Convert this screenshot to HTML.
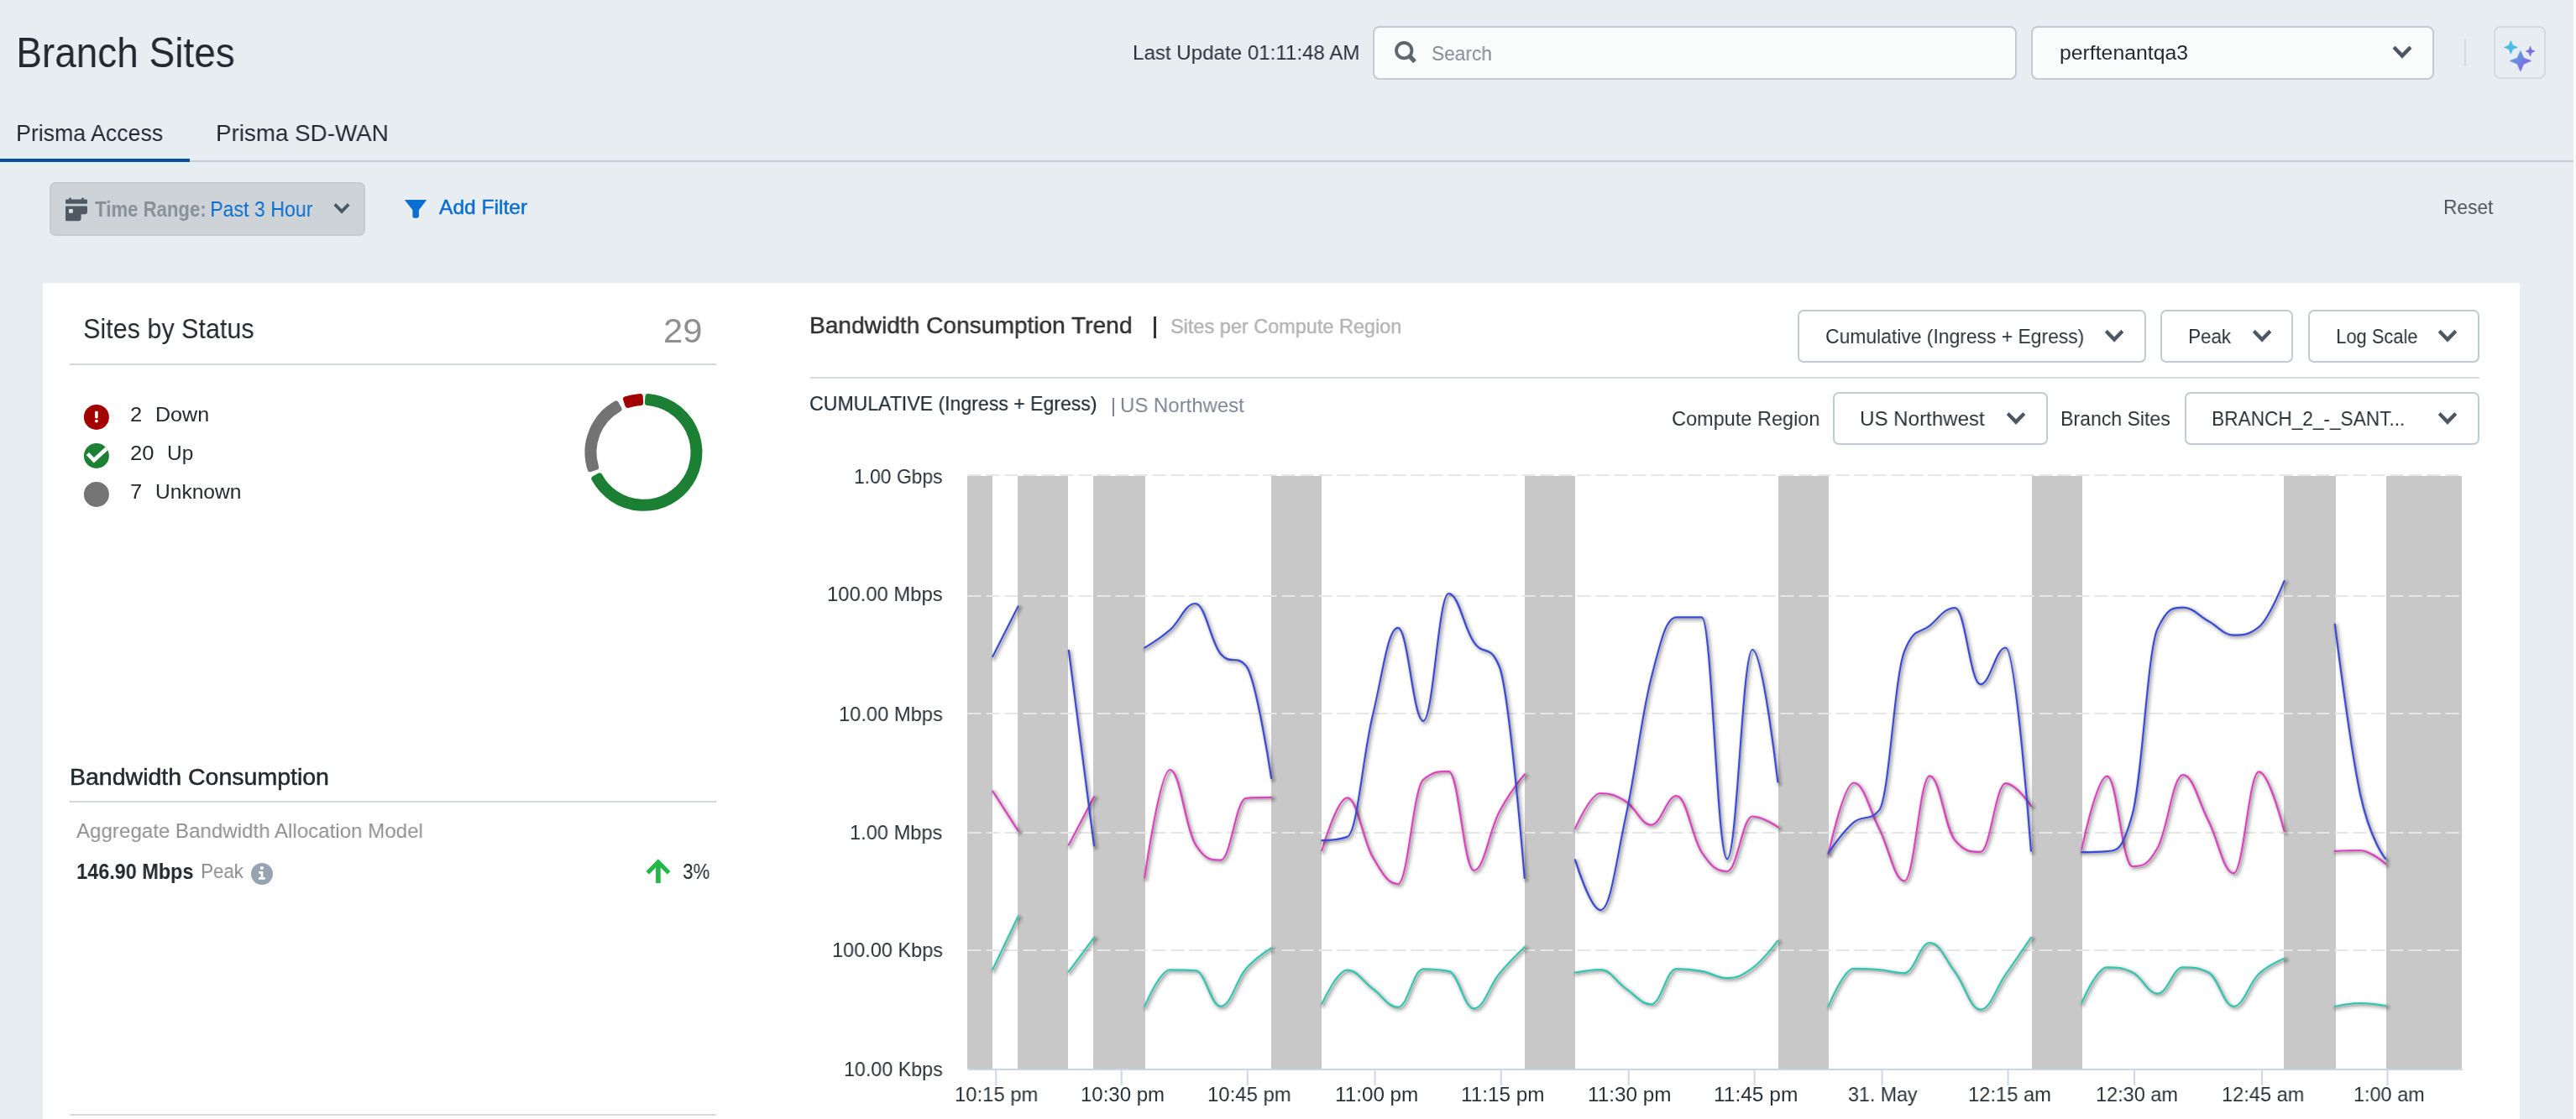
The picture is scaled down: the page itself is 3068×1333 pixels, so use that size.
<!DOCTYPE html>
<html><head><meta charset="utf-8"><style>
html,body{margin:0;padding:0;}
body{width:3068px;height:1333px;overflow:hidden;background:#e8edf1;position:relative;font-family:"Liberation Sans",sans-serif;}
.t{position:absolute;white-space:nowrap;line-height:1;will-change:transform;font-family:"Liberation Sans",sans-serif;}
.box{position:absolute;box-sizing:border-box;}
.abs{position:absolute;overflow:visible;}
</style></head><body>
<div class="t" style="left:18.90px;top:38.20px;font-size:50px;color:#22292f;transform:scaleX(0.9185);transform-origin:4.00px 0;">Branch Sites</div>
<div class="t" style="left:1348.70px;top:51.17px;font-size:24.5px;color:#2a3137;transform:scaleX(0.9843);transform-origin:2.00px 0;">Last Update 01:11:48 AM</div>
<div class="box" style="left:1635px;top:31px;width:767px;height:64px;border-radius:8px;background:#fafbfb;border:2px solid #c3cad1;"></div>
<svg class="abs" style="left:1655px;top:45px" width="40" height="36" viewBox="0 0 40 36"><circle cx="17.2" cy="15.2" r="9.2" fill="none" stroke="#5c6770" stroke-width="3.8"/><line x1="23.5" y1="21.5" x2="30" y2="28.5" stroke="#5c6770" stroke-width="5.4"/></svg>
<div class="t" style="left:1704.70px;top:51.60px;font-size:24px;color:#808b94;transform:scaleX(0.9442);transform-origin:1.00px 0;">Search</div>
<div class="box" style="left:2419px;top:31px;width:480px;height:64px;border-radius:8px;background:#fafbfb;border:2px solid #c3cad1;"></div>
<div class="t" style="left:2452.90px;top:50.77px;font-size:24.5px;color:#22292f;transform:scaleX(1.0121);transform-origin:1.50px 0;">perftenantqa3</div>
<svg class="abs" style="left:0;top:0" width="3068" height="600"><path d="M2850.00 57.80 L2852.50 55.00 L2861.00 63.60 L2869.50 55.00 L2872.00 57.80 L2861.00 69.40Z" fill="#4b5661" stroke="#4b5661" stroke-width="0.8" stroke-linejoin="round"/></svg>
<div class="box" style="left:2935px;top:47px;width:2px;height:32px;background:#d3d8dd"></div>
<div class="box" style="left:2970px;top:31px;width:62px;height:63px;border-radius:8px;background:#e8edf1;border:2px solid #d5dade;box-sizing:border-box"></div>
<svg class="abs" style="left:0;top:0" width="3068" height="120"><defs><linearGradient id="sg" gradientUnits="userSpaceOnUse" x1="2990" y1="60" x2="3014" y2="85"><stop offset="0" stop-color="#52b2e0"/><stop offset="1" stop-color="#9150e2"/></linearGradient><linearGradient id="sg2" gradientUnits="userSpaceOnUse" x1="3008" y1="55" x2="3019" y2="67"><stop offset="0" stop-color="#6f86e0"/><stop offset="1" stop-color="#8c55e0"/></linearGradient></defs><path d="M2990.40 48.50 L2992.80 54.03 L2998.40 56.40 L2992.80 58.77 L2990.40 64.30 L2988.00 58.77 L2982.40 56.40 L2988.00 54.03Z" fill="#4bbde0" stroke="#4bbde0" stroke-width="0.6" stroke-linejoin="round"/><path d="M3001.90 60.20 L3005.77 68.88 L3014.80 72.60 L3005.77 76.32 L3001.90 85.00 L2998.03 76.32 L2989.00 72.60 L2998.03 68.88Z" fill="url(#sg)" stroke="url(#sg)" stroke-width="0.6" stroke-linejoin="round"/><path d="M3013.50 55.10 L3015.15 59.23 L3019.00 61.00 L3015.15 62.77 L3013.50 66.90 L3011.85 62.77 L3008.00 61.00 L3011.85 59.23Z" fill="url(#sg2)" stroke="url(#sg2)" stroke-width="0.6" stroke-linejoin="round"/></svg>
<div class="t" style="left:18.85px;top:143.58px;font-size:28.5px;color:#22292f;transform:scaleX(0.9361);transform-origin:2.25px 0;">Prisma Access</div>
<div class="t" style="left:257.45px;top:143.58px;font-size:28.5px;color:#22292f;transform:scaleX(0.9743);transform-origin:2.25px 0;">Prisma SD-WAN</div>
<div class="box" style="left:0;top:191px;width:3068px;height:2px;background:#c8ced3"></div>
<div class="box" style="left:3065px;top:0;width:3px;height:1333px;background:#fbfcfc"></div>
<div class="box" style="left:0;top:189px;width:226px;height:4px;background:#0050a0"></div>
<div class="box" style="left:59px;top:217px;width:376px;height:64px;border-radius:7px;background:#ced3d8;border:2px solid #c6cbd0;box-sizing:border-box"></div>
<svg class="abs" style="left:78px;top:234.5px" width="28" height="30" viewBox="0 0 28 30">
<rect x="4.1" y="0.4" width="2.7" height="5" rx="1.2" fill="#4f5a64"/><rect x="19.1" y="0.4" width="2.7" height="5" rx="1.2" fill="#4f5a64"/>
<rect x="0" y="2.4" width="26" height="5.4" rx="1.2" fill="#4f5a64"/>
<path d="M1.2 10.6 H24.8 Q26 10.6 26 11.8 V17 Q26 20.2 22.8 20.2 H18.6 V25 Q18.6 28.2 15.4 28.2 H1.2 Q0 28.2 0 27 V11.8 Q0 10.6 1.2 10.6 Z" fill="#4f5a64"/>
<rect x="4" y="14.1" width="4.9" height="4.6" rx="1" fill="#dfe3e6"/></svg>
<div class="t" style="left:112.95px;top:235.90px;font-size:26px;color:#87919a;transform:scaleX(0.8523);transform-origin:0.25px 0;font-weight:bold;">Time Range:</div>
<div class="t" style="left:249.70px;top:235.90px;font-size:26px;color:#0a70d0;transform:scaleX(0.8896);transform-origin:2.00px 0;">Past 3 Hour</div>
<svg class="abs" style="left:0;top:0" width="3068" height="600"><path d="M397.98 244.80 L400.03 242.50 L407.00 249.55 L413.97 242.50 L416.02 244.80 L407.00 254.31Z" fill="#4b5661" stroke="#4b5661" stroke-width="0.8" stroke-linejoin="round"/></svg>
<svg class="abs" style="left:482px;top:237.6px" width="28" height="24" viewBox="0 0 28 24">
<path d="M0 0.3 Q0 0 0.5 0 H25.6 Q26.1 0 26.1 0.3 L16.9 12.2 V19.8 Q16.9 21.8 13.05 21.8 Q9.4 21.8 9.4 19.8 V12.2 Z" fill="#0a6fd0"/></svg>
<div class="t" style="left:522.90px;top:235.08px;font-size:24.5px;color:#0a6fd0;transform:scaleX(1.0029);transform-origin:0.00px 0;-webkit-text-stroke:0.5px #0a6fd0;">Add Filter</div>
<div class="t" style="left:2909.60px;top:235.40px;font-size:24px;color:#4a5560;transform:scaleX(0.9438);transform-origin:2.00px 0;">Reset</div>
<div class="box" style="left:51px;top:337px;width:2950px;height:996px;background:#ffffff"></div>
<div class="t" style="left:98.50px;top:375.25px;font-size:33px;color:#22292f;transform:scaleX(0.9247);transform-origin:1.50px 0;">Sites by Status</div>
<div class="t" style="left:790.00px;top:373.65px;font-size:41px;color:#8f8f8f;transform:scaleX(1.0180);transform-origin:2.00px 0;">29</div>
<div class="box" style="left:83px;top:432.5px;width:770px;height:2px;background:#d6d9dc"></div>
<svg class="abs" style="left:0;top:0" width="200" height="620">
<defs><clipPath id="cu"><circle cx="114.9" cy="543" r="15"/></clipPath></defs>
<circle cx="114.9" cy="496.9" r="15" fill="#a30000"/>
<rect x="113.1" y="489.8" width="3.6" height="8.6" rx="1.3" fill="#fff"/><circle cx="114.9" cy="501.6" r="1.9" fill="#fff"/>
<circle cx="114.9" cy="543" r="15" fill="#1d8035"/>
<polyline clip-path="url(#cu)" points="104.4,540.5 111.9,548.3 129,532.5" fill="none" stroke="#fff" stroke-width="4.6"/>
<circle cx="114.9" cy="588.9" r="15" fill="#747474"/>
</svg>
<div class="t" style="left:154.75px;top:482.18px;font-size:24.5px;color:#22292f;transform:scaleX(1.0400);transform-origin:1.25px 0;">2</div>
<div class="t" style="left:184.80px;top:482.18px;font-size:24.5px;color:#22292f;transform:scaleX(1.0237);transform-origin:2.00px 0;">Down</div>
<div class="t" style="left:154.75px;top:527.77px;font-size:24.5px;color:#22292f;transform:scaleX(1.0455);transform-origin:1.25px 0;">20</div>
<div class="t" style="left:198.75px;top:527.77px;font-size:24.5px;color:#22292f;transform:scaleX(0.9965);transform-origin:1.75px 0;">Up</div>
<div class="t" style="left:154.75px;top:573.97px;font-size:24.5px;color:#22292f;transform:scaleX(1.0400);transform-origin:1.25px 0;">7</div>
<div class="t" style="left:185.05px;top:573.97px;font-size:24.5px;color:#22292f;transform:scaleX(1.0025);transform-origin:1.75px 0;">Unknown</div>
<svg class="abs" style="left:0;top:0" width="1000" height="700"><path d="M771.93 472.52 A66.5 66.5 0 1 1 707.88 570.21 L714.05 566.90 A59.5 59.5 0 1 0 771.36 479.50Z" fill="#1b8034" stroke="#1b8034" stroke-width="7.0" stroke-linejoin="round"/><path d="M703.01 558.59 A66.5 66.5 0 0 1 733.57 481.03 L737.04 487.11 A59.5 59.5 0 0 0 709.70 556.51Z" fill="#737373" stroke="#737373" stroke-width="7.0" stroke-linejoin="round"/><path d="M745.60 475.67 A66.5 66.5 0 0 1 762.23 472.44 L762.68 479.42 A59.5 59.5 0 0 0 747.80 482.31Z" fill="#a00000" stroke="#a00000" stroke-width="7.0" stroke-linejoin="round"/></svg>
<div class="t" style="left:82.95px;top:910.77px;font-size:28.5px;color:#22292f;-webkit-text-stroke:0.5px #22292f;">Bandwidth Consumption</div>
<div class="box" style="left:83px;top:953.5px;width:770px;height:2px;background:#d6d9dc"></div>
<div class="t" style="left:91.30px;top:978.07px;font-size:24.5px;color:#8f8f8f;transform:scaleX(0.9841);transform-origin:0.00px 0;">Aggregate Bandwidth Allocation Model</div>
<div class="t" style="left:91.40px;top:1024.80px;font-size:26px;color:#22292f;transform:scaleX(0.9005);transform-origin:1.50px 0;font-weight:bold;">146.90 Mbps</div>
<div class="t" style="left:238.90px;top:1025.88px;font-size:24.5px;color:#8c8c8c;transform:scaleX(0.9079);transform-origin:2.00px 0;">Peak</div>
<svg class="abs" style="left:0;top:0" width="900" height="1100">
<circle cx="312" cy="1041" r="13" fill="#97a3b0"/>
<circle cx="311.9" cy="1034" r="2.1" fill="#fff"/>
<path d="M308.2 1038 H313.3 V1045 H315.7 V1047.8 H308 V1045 H310.6 V1040.8 H308.2 Z" fill="#fff"/>
<path d="M783.9 1023.2 L798.4 1038 L794.7 1041.5 L786.7 1033.5 V1051.9 H781.1 V1033.5 L773.1 1041.5 L769.4 1038 Z" fill="#21b847"/>
</svg>
<div class="t" style="left:812.50px;top:1025.75px;font-size:25px;color:#22292f;transform:scaleX(0.8905);transform-origin:1.00px 0;">3%</div>
<div class="box" style="left:83px;top:1326.5px;width:770px;height:2px;background:#d6d9dc"></div>
<div class="t" style="left:964.35px;top:373.27px;font-size:28.5px;color:#303030;transform:scaleX(0.9864);transform-origin:2.25px 0;-webkit-text-stroke:0.45px #303030;">Bandwidth Consumption Trend</div>
<div class="box" style="left:1374.2px;top:376.5px;width:2.4px;height:26.5px;background:#333"></div>
<div class="t" style="left:1393.85px;top:376.68px;font-size:24.5px;color:#b3b3b3;transform:scaleX(0.9578);transform-origin:1.25px 0;-webkit-text-stroke:0.45px #b3b3b3;">Sites per Compute Region</div>
<div class="box" style="left:965px;top:448.5px;width:1988px;height:2px;background:#d9dcdf"></div>
<div class="t" style="left:964.35px;top:469.07px;font-size:24.5px;color:#1f2a33;transform:scaleX(0.9416);transform-origin:1.25px 0;-webkit-text-stroke:0.2px #1f2a33;">CUMULATIVE (Ingress + Egress)</div>
<div class="box" style="left:1325px;top:474px;width:2px;height:21.6px;background:#7b8794"></div>
<div class="t" style="left:1334.25px;top:470.88px;font-size:24.5px;color:#7b8692;transform:scaleX(0.9776);transform-origin:1.75px 0;">US Northwest</div>
<div class="box" style="left:2140.5px;top:369px;width:415.0px;height:63px;border-radius:7px;background:#fff;border:2px solid #c3cad1;box-sizing:border-box"></div>
<div class="t" style="left:2173.75px;top:388.88px;font-size:24.5px;color:#2a3137;transform:scaleX(0.9334);transform-origin:1.25px 0;">Cumulative (Ingress + Egress)</div>
<svg class="abs" style="left:0;top:0" width="3068" height="600"><path d="M2507.32 395.94 L2509.77 393.20 L2518.10 401.63 L2526.43 393.20 L2528.88 395.94 L2518.10 407.31Z" fill="#4b5661" stroke="#4b5661" stroke-width="0.8" stroke-linejoin="round"/></svg>
<div class="box" style="left:2573px;top:369px;width:158px;height:63px;border-radius:7px;background:#fff;border:2px solid #c3cad1;box-sizing:border-box"></div>
<div class="t" style="left:2606.30px;top:388.88px;font-size:24.5px;color:#2a3137;transform:scaleX(0.9116);transform-origin:2.00px 0;">Peak</div>
<svg class="abs" style="left:0;top:0" width="3068" height="600"><path d="M2683.32 395.94 L2685.77 393.20 L2694.10 401.63 L2702.43 393.20 L2704.88 395.94 L2694.10 407.31Z" fill="#4b5661" stroke="#4b5661" stroke-width="0.8" stroke-linejoin="round"/></svg>
<div class="box" style="left:2748.5px;top:369px;width:204.0px;height:63px;border-radius:7px;background:#fff;border:2px solid #c3cad1;box-sizing:border-box"></div>
<div class="t" style="left:2781.60px;top:388.88px;font-size:24.5px;color:#2a3137;transform:scaleX(0.8927);transform-origin:2.00px 0;">Log Scale</div>
<svg class="abs" style="left:0;top:0" width="3068" height="600"><path d="M2904.22 395.94 L2906.67 393.20 L2915.00 401.63 L2923.33 393.20 L2925.78 395.94 L2915.00 407.31Z" fill="#4b5661" stroke="#4b5661" stroke-width="0.8" stroke-linejoin="round"/></svg>
<div class="t" style="left:1990.55px;top:487.18px;font-size:24.5px;color:#2a3137;transform:scaleX(0.9591);transform-origin:1.25px 0;">Compute Region</div>
<div class="box" style="left:2182.5px;top:467px;width:256.0px;height:63px;border-radius:7px;background:#fff;border:2px solid #c3cad1;box-sizing:border-box"></div>
<div class="t" style="left:2215.35px;top:487.18px;font-size:24.5px;color:#2a3137;transform:scaleX(0.9836);transform-origin:1.75px 0;">US Northwest</div>
<svg class="abs" style="left:0;top:0" width="3068" height="600"><path d="M2390.22 494.14 L2392.67 491.40 L2401.00 499.83 L2409.33 491.40 L2411.78 494.14 L2401.00 505.51Z" fill="#4b5661" stroke="#4b5661" stroke-width="0.8" stroke-linejoin="round"/></svg>
<div class="t" style="left:2454.30px;top:487.18px;font-size:24.5px;color:#2a3137;transform:scaleX(0.9402);transform-origin:2.00px 0;">Branch Sites</div>
<div class="box" style="left:2601.5px;top:467px;width:351.0px;height:63px;border-radius:7px;background:#fff;border:2px solid #c3cad1;box-sizing:border-box"></div>
<div class="t" style="left:2634.20px;top:487.18px;font-size:24.5px;color:#2a3137;transform:scaleX(0.9238);transform-origin:2.00px 0;">BRANCH_2_-_SANT...</div>
<svg class="abs" style="left:0;top:0" width="3068" height="600"><path d="M2904.22 494.14 L2906.67 491.40 L2915.00 499.83 L2923.33 491.40 L2925.78 494.14 L2915.00 505.51Z" fill="#4b5661" stroke="#4b5661" stroke-width="0.8" stroke-linejoin="round"/></svg>
<svg class="abs" style="left:0;top:0" width="3068" height="1333"><rect x="1152" y="567" width="30" height="706" fill="#c8c8c8"/><rect x="1212" y="567" width="60" height="706" fill="#c8c8c8"/><rect x="1302" y="567" width="62" height="706" fill="#c8c8c8"/><rect x="1514" y="567" width="60" height="706" fill="#c8c8c8"/><rect x="1816" y="567" width="60" height="706" fill="#c8c8c8"/><rect x="2118" y="567" width="60" height="706" fill="#c8c8c8"/><rect x="2420" y="567" width="60" height="706" fill="#c8c8c8"/><rect x="2720" y="567" width="62" height="706" fill="#c8c8c8"/><rect x="2842" y="567" width="90" height="706" fill="#c8c8c8"/><line x1="1152.6" y1="566" x2="2932" y2="566" stroke="#e6e6e6" stroke-width="2" stroke-dasharray="16,6"/><line x1="1152.6" y1="710" x2="2932" y2="710" stroke="#e6e6e6" stroke-width="2" stroke-dasharray="16,6"/><line x1="1152.6" y1="850" x2="2932" y2="850" stroke="#e6e6e6" stroke-width="2" stroke-dasharray="16,6"/><line x1="1152.6" y1="992" x2="2932" y2="992" stroke="#e6e6e6" stroke-width="2" stroke-dasharray="16,6"/><line x1="1152.6" y1="1132" x2="2932" y2="1132" stroke="#e6e6e6" stroke-width="2" stroke-dasharray="16,6"/><line x1="1152.6" y1="1274" x2="2933" y2="1274" stroke="#ccd6eb" stroke-width="2"/><line x1="1186.3" y1="1274" x2="1186.3" y2="1293" stroke="#ccd6eb" stroke-width="2"/><line x1="1335.7" y1="1274" x2="1335.7" y2="1293" stroke="#ccd6eb" stroke-width="2"/><line x1="1485.8" y1="1274" x2="1485.8" y2="1293" stroke="#ccd6eb" stroke-width="2"/><line x1="1637.6" y1="1274" x2="1637.6" y2="1293" stroke="#ccd6eb" stroke-width="2"/><line x1="1787.7" y1="1274" x2="1787.7" y2="1293" stroke="#ccd6eb" stroke-width="2"/><line x1="1939.7" y1="1274" x2="1939.7" y2="1293" stroke="#ccd6eb" stroke-width="2"/><line x1="2089.6" y1="1274" x2="2089.6" y2="1293" stroke="#ccd6eb" stroke-width="2"/><line x1="2241.6" y1="1274" x2="2241.6" y2="1293" stroke="#ccd6eb" stroke-width="2"/><line x1="2391.6" y1="1274" x2="2391.6" y2="1293" stroke="#ccd6eb" stroke-width="2"/><line x1="2542.1" y1="1274" x2="2542.1" y2="1293" stroke="#ccd6eb" stroke-width="2"/><line x1="2694.1" y1="1274" x2="2694.1" y2="1293" stroke="#ccd6eb" stroke-width="2"/><line x1="2843.5" y1="1274" x2="2843.5" y2="1293" stroke="#ccd6eb" stroke-width="2"/><g transform="translate(2,2)" fill="none" stroke="#000" stroke-linejoin="round" stroke-linecap="round"><path d="M1182.36 1154.70 C1182.36 1154.70 1212.52 1091.80 1212.52 1091.80 M1272.84 1157.40 C1272.84 1157.40 1303.00 1116.80 1303.00 1116.80 M1363.32 1198.80 C1363.32 1198.80 1381.42 1155.30 1393.48 1155.30 C1405.54 1155.30 1411.58 1155.30 1423.64 1156.00 C1435.70 1156.70 1441.74 1198.80 1453.80 1198.80 C1465.86 1198.80 1471.90 1167.88 1483.96 1154.00 C1496.02 1140.12 1514.12 1129.40 1514.12 1129.40 M1574.44 1195.70 C1574.44 1195.70 1592.54 1155.70 1604.60 1155.70 C1616.66 1155.70 1622.70 1168.78 1634.76 1177.60 C1646.82 1186.42 1652.86 1199.80 1664.92 1199.80 C1676.98 1199.80 1683.02 1154.40 1695.08 1154.40 C1707.14 1154.40 1713.18 1154.40 1725.24 1156.90 C1737.30 1159.40 1743.34 1201.30 1755.40 1201.30 C1767.46 1201.30 1773.50 1174.62 1785.56 1160.00 C1797.62 1145.38 1815.72 1128.20 1815.72 1128.20 M1876.04 1158.60 C1876.04 1158.60 1894.14 1155.10 1906.20 1155.10 C1918.26 1155.10 1924.30 1169.36 1936.36 1177.60 C1948.42 1185.84 1954.46 1196.30 1966.52 1196.30 C1978.58 1196.30 1984.62 1154.10 1996.68 1154.10 C2008.74 1154.10 2014.78 1154.70 2026.84 1156.90 C2038.90 1159.10 2044.94 1165.10 2057.00 1165.10 C2069.06 1165.10 2075.10 1162.08 2087.16 1153.20 C2099.22 1144.32 2117.32 1120.70 2117.32 1120.70 M2177.64 1198.80 C2177.64 1198.80 2195.74 1153.80 2207.80 1153.80 C2219.86 1153.80 2225.90 1153.94 2237.96 1155.00 C2250.02 1156.06 2256.06 1159.10 2268.12 1159.10 C2280.18 1159.10 2286.22 1123.20 2298.28 1123.20 C2310.34 1123.20 2316.38 1142.32 2328.44 1158.20 C2340.50 1174.08 2346.54 1202.60 2358.60 1202.60 C2370.66 1202.60 2376.70 1177.84 2388.76 1160.70 C2400.82 1143.56 2418.92 1116.90 2418.92 1116.90 M2479.24 1194.50 C2479.24 1194.50 2497.34 1152.30 2509.40 1152.30 C2521.46 1152.30 2527.50 1152.30 2539.56 1158.20 C2551.62 1164.10 2557.66 1183.60 2569.72 1183.60 C2581.78 1183.60 2587.82 1152.30 2599.88 1152.30 C2611.94 1152.30 2617.98 1152.30 2630.04 1158.20 C2642.10 1164.10 2648.14 1198.80 2660.20 1198.80 C2672.26 1198.80 2678.30 1171.38 2690.36 1160.00 C2702.42 1148.62 2720.52 1141.90 2720.52 1141.90 M2780.84 1199.00 C2780.84 1199.00 2798.94 1195.00 2811.00 1195.00 C2823.06 1195.00 2841.16 1198.00 2841.16 1198.00" stroke-opacity="0.05" stroke-width="10"/><path d="M1182.36 1154.70 C1182.36 1154.70 1212.52 1091.80 1212.52 1091.80 M1272.84 1157.40 C1272.84 1157.40 1303.00 1116.80 1303.00 1116.80 M1363.32 1198.80 C1363.32 1198.80 1381.42 1155.30 1393.48 1155.30 C1405.54 1155.30 1411.58 1155.30 1423.64 1156.00 C1435.70 1156.70 1441.74 1198.80 1453.80 1198.80 C1465.86 1198.80 1471.90 1167.88 1483.96 1154.00 C1496.02 1140.12 1514.12 1129.40 1514.12 1129.40 M1574.44 1195.70 C1574.44 1195.70 1592.54 1155.70 1604.60 1155.70 C1616.66 1155.70 1622.70 1168.78 1634.76 1177.60 C1646.82 1186.42 1652.86 1199.80 1664.92 1199.80 C1676.98 1199.80 1683.02 1154.40 1695.08 1154.40 C1707.14 1154.40 1713.18 1154.40 1725.24 1156.90 C1737.30 1159.40 1743.34 1201.30 1755.40 1201.30 C1767.46 1201.30 1773.50 1174.62 1785.56 1160.00 C1797.62 1145.38 1815.72 1128.20 1815.72 1128.20 M1876.04 1158.60 C1876.04 1158.60 1894.14 1155.10 1906.20 1155.10 C1918.26 1155.10 1924.30 1169.36 1936.36 1177.60 C1948.42 1185.84 1954.46 1196.30 1966.52 1196.30 C1978.58 1196.30 1984.62 1154.10 1996.68 1154.10 C2008.74 1154.10 2014.78 1154.70 2026.84 1156.90 C2038.90 1159.10 2044.94 1165.10 2057.00 1165.10 C2069.06 1165.10 2075.10 1162.08 2087.16 1153.20 C2099.22 1144.32 2117.32 1120.70 2117.32 1120.70 M2177.64 1198.80 C2177.64 1198.80 2195.74 1153.80 2207.80 1153.80 C2219.86 1153.80 2225.90 1153.94 2237.96 1155.00 C2250.02 1156.06 2256.06 1159.10 2268.12 1159.10 C2280.18 1159.10 2286.22 1123.20 2298.28 1123.20 C2310.34 1123.20 2316.38 1142.32 2328.44 1158.20 C2340.50 1174.08 2346.54 1202.60 2358.60 1202.60 C2370.66 1202.60 2376.70 1177.84 2388.76 1160.70 C2400.82 1143.56 2418.92 1116.90 2418.92 1116.90 M2479.24 1194.50 C2479.24 1194.50 2497.34 1152.30 2509.40 1152.30 C2521.46 1152.30 2527.50 1152.30 2539.56 1158.20 C2551.62 1164.10 2557.66 1183.60 2569.72 1183.60 C2581.78 1183.60 2587.82 1152.30 2599.88 1152.30 C2611.94 1152.30 2617.98 1152.30 2630.04 1158.20 C2642.10 1164.10 2648.14 1198.80 2660.20 1198.80 C2672.26 1198.80 2678.30 1171.38 2690.36 1160.00 C2702.42 1148.62 2720.52 1141.90 2720.52 1141.90 M2780.84 1199.00 C2780.84 1199.00 2798.94 1195.00 2811.00 1195.00 C2823.06 1195.00 2841.16 1198.00 2841.16 1198.00" stroke-opacity="0.1" stroke-width="6"/><path d="M1182.36 1154.70 C1182.36 1154.70 1212.52 1091.80 1212.52 1091.80 M1272.84 1157.40 C1272.84 1157.40 1303.00 1116.80 1303.00 1116.80 M1363.32 1198.80 C1363.32 1198.80 1381.42 1155.30 1393.48 1155.30 C1405.54 1155.30 1411.58 1155.30 1423.64 1156.00 C1435.70 1156.70 1441.74 1198.80 1453.80 1198.80 C1465.86 1198.80 1471.90 1167.88 1483.96 1154.00 C1496.02 1140.12 1514.12 1129.40 1514.12 1129.40 M1574.44 1195.70 C1574.44 1195.70 1592.54 1155.70 1604.60 1155.70 C1616.66 1155.70 1622.70 1168.78 1634.76 1177.60 C1646.82 1186.42 1652.86 1199.80 1664.92 1199.80 C1676.98 1199.80 1683.02 1154.40 1695.08 1154.40 C1707.14 1154.40 1713.18 1154.40 1725.24 1156.90 C1737.30 1159.40 1743.34 1201.30 1755.40 1201.30 C1767.46 1201.30 1773.50 1174.62 1785.56 1160.00 C1797.62 1145.38 1815.72 1128.20 1815.72 1128.20 M1876.04 1158.60 C1876.04 1158.60 1894.14 1155.10 1906.20 1155.10 C1918.26 1155.10 1924.30 1169.36 1936.36 1177.60 C1948.42 1185.84 1954.46 1196.30 1966.52 1196.30 C1978.58 1196.30 1984.62 1154.10 1996.68 1154.10 C2008.74 1154.10 2014.78 1154.70 2026.84 1156.90 C2038.90 1159.10 2044.94 1165.10 2057.00 1165.10 C2069.06 1165.10 2075.10 1162.08 2087.16 1153.20 C2099.22 1144.32 2117.32 1120.70 2117.32 1120.70 M2177.64 1198.80 C2177.64 1198.80 2195.74 1153.80 2207.80 1153.80 C2219.86 1153.80 2225.90 1153.94 2237.96 1155.00 C2250.02 1156.06 2256.06 1159.10 2268.12 1159.10 C2280.18 1159.10 2286.22 1123.20 2298.28 1123.20 C2310.34 1123.20 2316.38 1142.32 2328.44 1158.20 C2340.50 1174.08 2346.54 1202.60 2358.60 1202.60 C2370.66 1202.60 2376.70 1177.84 2388.76 1160.70 C2400.82 1143.56 2418.92 1116.90 2418.92 1116.90 M2479.24 1194.50 C2479.24 1194.50 2497.34 1152.30 2509.40 1152.30 C2521.46 1152.30 2527.50 1152.30 2539.56 1158.20 C2551.62 1164.10 2557.66 1183.60 2569.72 1183.60 C2581.78 1183.60 2587.82 1152.30 2599.88 1152.30 C2611.94 1152.30 2617.98 1152.30 2630.04 1158.20 C2642.10 1164.10 2648.14 1198.80 2660.20 1198.80 C2672.26 1198.80 2678.30 1171.38 2690.36 1160.00 C2702.42 1148.62 2720.52 1141.90 2720.52 1141.90 M2780.84 1199.00 C2780.84 1199.00 2798.94 1195.00 2811.00 1195.00 C2823.06 1195.00 2841.16 1198.00 2841.16 1198.00" stroke-opacity="0.15" stroke-width="2"/></g><path d="M1182.36 1154.70 C1182.36 1154.70 1212.52 1091.80 1212.52 1091.80 M1272.84 1157.40 C1272.84 1157.40 1303.00 1116.80 1303.00 1116.80 M1363.32 1198.80 C1363.32 1198.80 1381.42 1155.30 1393.48 1155.30 C1405.54 1155.30 1411.58 1155.30 1423.64 1156.00 C1435.70 1156.70 1441.74 1198.80 1453.80 1198.80 C1465.86 1198.80 1471.90 1167.88 1483.96 1154.00 C1496.02 1140.12 1514.12 1129.40 1514.12 1129.40 M1574.44 1195.70 C1574.44 1195.70 1592.54 1155.70 1604.60 1155.70 C1616.66 1155.70 1622.70 1168.78 1634.76 1177.60 C1646.82 1186.42 1652.86 1199.80 1664.92 1199.80 C1676.98 1199.80 1683.02 1154.40 1695.08 1154.40 C1707.14 1154.40 1713.18 1154.40 1725.24 1156.90 C1737.30 1159.40 1743.34 1201.30 1755.40 1201.30 C1767.46 1201.30 1773.50 1174.62 1785.56 1160.00 C1797.62 1145.38 1815.72 1128.20 1815.72 1128.20 M1876.04 1158.60 C1876.04 1158.60 1894.14 1155.10 1906.20 1155.10 C1918.26 1155.10 1924.30 1169.36 1936.36 1177.60 C1948.42 1185.84 1954.46 1196.30 1966.52 1196.30 C1978.58 1196.30 1984.62 1154.10 1996.68 1154.10 C2008.74 1154.10 2014.78 1154.70 2026.84 1156.90 C2038.90 1159.10 2044.94 1165.10 2057.00 1165.10 C2069.06 1165.10 2075.10 1162.08 2087.16 1153.20 C2099.22 1144.32 2117.32 1120.70 2117.32 1120.70 M2177.64 1198.80 C2177.64 1198.80 2195.74 1153.80 2207.80 1153.80 C2219.86 1153.80 2225.90 1153.94 2237.96 1155.00 C2250.02 1156.06 2256.06 1159.10 2268.12 1159.10 C2280.18 1159.10 2286.22 1123.20 2298.28 1123.20 C2310.34 1123.20 2316.38 1142.32 2328.44 1158.20 C2340.50 1174.08 2346.54 1202.60 2358.60 1202.60 C2370.66 1202.60 2376.70 1177.84 2388.76 1160.70 C2400.82 1143.56 2418.92 1116.90 2418.92 1116.90 M2479.24 1194.50 C2479.24 1194.50 2497.34 1152.30 2509.40 1152.30 C2521.46 1152.30 2527.50 1152.30 2539.56 1158.20 C2551.62 1164.10 2557.66 1183.60 2569.72 1183.60 C2581.78 1183.60 2587.82 1152.30 2599.88 1152.30 C2611.94 1152.30 2617.98 1152.30 2630.04 1158.20 C2642.10 1164.10 2648.14 1198.80 2660.20 1198.80 C2672.26 1198.80 2678.30 1171.38 2690.36 1160.00 C2702.42 1148.62 2720.52 1141.90 2720.52 1141.90 M2780.84 1199.00 C2780.84 1199.00 2798.94 1195.00 2811.00 1195.00 C2823.06 1195.00 2841.16 1198.00 2841.16 1198.00" fill="none" stroke="#2fc7b2" stroke-width="2.2" stroke-linejoin="round" stroke-linecap="round"/><g transform="translate(2,2)" fill="none" stroke="#000" stroke-linejoin="round" stroke-linecap="round"><path d="M1182.36 942.50 C1182.36 942.50 1212.52 989.70 1212.52 989.70 M1272.84 1006.40 C1272.84 1006.40 1303.00 949.20 1303.00 949.20 M1363.32 1045.50 C1363.32 1045.50 1381.42 917.00 1393.48 917.00 C1405.54 917.00 1411.58 986.90 1423.64 1005.80 C1435.70 1024.70 1441.74 1024.70 1453.80 1024.70 C1465.86 1024.70 1471.90 951.80 1483.96 950.80 C1496.02 949.80 1514.12 949.80 1514.12 949.80 M1574.44 1013.00 C1574.44 1013.00 1592.54 950.40 1604.60 950.40 C1616.66 950.40 1622.70 1000.28 1634.76 1020.80 C1646.82 1041.32 1652.86 1053.00 1664.92 1053.00 C1676.98 1053.00 1683.02 938.90 1695.08 928.90 C1707.14 918.90 1713.18 918.90 1725.24 918.90 C1737.30 918.90 1743.34 1036.90 1755.40 1036.90 C1767.46 1036.90 1773.50 990.08 1785.56 967.20 C1797.62 944.32 1815.72 922.50 1815.72 922.50 M1876.04 986.90 C1876.04 986.90 1894.14 945.00 1906.20 945.00 C1918.26 945.00 1924.30 947.18 1936.36 954.70 C1948.42 962.22 1954.46 982.60 1966.52 982.60 C1978.58 982.60 1984.62 948.20 1996.68 948.20 C2008.74 948.20 2014.78 997.54 2026.84 1015.50 C2038.90 1033.46 2044.94 1038.00 2057.00 1038.00 C2069.06 1038.00 2075.10 972.50 2087.16 972.50 C2099.22 972.50 2117.32 985.10 2117.32 985.10 M2177.64 1017.20 C2177.64 1017.20 2195.74 932.50 2207.80 932.50 C2219.86 932.50 2225.90 963.52 2237.96 986.90 C2250.02 1010.28 2256.06 1049.40 2268.12 1049.40 C2280.18 1049.40 2286.22 924.30 2298.28 924.30 C2310.34 924.30 2316.38 987.60 2328.44 1001.20 C2340.50 1014.80 2346.54 1014.80 2358.60 1014.80 C2370.66 1014.80 2376.70 933.20 2388.76 933.20 C2400.82 933.20 2418.92 960.00 2418.92 960.00 M2479.24 1011.60 C2479.24 1011.60 2497.34 924.60 2509.40 924.60 C2521.46 924.60 2527.50 1032.00 2539.56 1032.00 C2551.62 1032.00 2557.66 1031.56 2569.72 1009.80 C2581.78 988.04 2587.82 923.20 2599.88 923.20 C2611.94 923.20 2617.98 954.20 2630.04 977.60 C2642.10 1001.00 2648.14 1040.20 2660.20 1040.20 C2672.26 1040.20 2678.30 919.30 2690.36 919.30 C2702.42 919.30 2720.52 990.10 2720.52 990.10 M2780.84 1013.90 C2780.84 1013.90 2798.94 1013.00 2811.00 1013.00 C2823.06 1013.00 2841.16 1029.00 2841.16 1029.00" stroke-opacity="0.05" stroke-width="10"/><path d="M1182.36 942.50 C1182.36 942.50 1212.52 989.70 1212.52 989.70 M1272.84 1006.40 C1272.84 1006.40 1303.00 949.20 1303.00 949.20 M1363.32 1045.50 C1363.32 1045.50 1381.42 917.00 1393.48 917.00 C1405.54 917.00 1411.58 986.90 1423.64 1005.80 C1435.70 1024.70 1441.74 1024.70 1453.80 1024.70 C1465.86 1024.70 1471.90 951.80 1483.96 950.80 C1496.02 949.80 1514.12 949.80 1514.12 949.80 M1574.44 1013.00 C1574.44 1013.00 1592.54 950.40 1604.60 950.40 C1616.66 950.40 1622.70 1000.28 1634.76 1020.80 C1646.82 1041.32 1652.86 1053.00 1664.92 1053.00 C1676.98 1053.00 1683.02 938.90 1695.08 928.90 C1707.14 918.90 1713.18 918.90 1725.24 918.90 C1737.30 918.90 1743.34 1036.90 1755.40 1036.90 C1767.46 1036.90 1773.50 990.08 1785.56 967.20 C1797.62 944.32 1815.72 922.50 1815.72 922.50 M1876.04 986.90 C1876.04 986.90 1894.14 945.00 1906.20 945.00 C1918.26 945.00 1924.30 947.18 1936.36 954.70 C1948.42 962.22 1954.46 982.60 1966.52 982.60 C1978.58 982.60 1984.62 948.20 1996.68 948.20 C2008.74 948.20 2014.78 997.54 2026.84 1015.50 C2038.90 1033.46 2044.94 1038.00 2057.00 1038.00 C2069.06 1038.00 2075.10 972.50 2087.16 972.50 C2099.22 972.50 2117.32 985.10 2117.32 985.10 M2177.64 1017.20 C2177.64 1017.20 2195.74 932.50 2207.80 932.50 C2219.86 932.50 2225.90 963.52 2237.96 986.90 C2250.02 1010.28 2256.06 1049.40 2268.12 1049.40 C2280.18 1049.40 2286.22 924.30 2298.28 924.30 C2310.34 924.30 2316.38 987.60 2328.44 1001.20 C2340.50 1014.80 2346.54 1014.80 2358.60 1014.80 C2370.66 1014.80 2376.70 933.20 2388.76 933.20 C2400.82 933.20 2418.92 960.00 2418.92 960.00 M2479.24 1011.60 C2479.24 1011.60 2497.34 924.60 2509.40 924.60 C2521.46 924.60 2527.50 1032.00 2539.56 1032.00 C2551.62 1032.00 2557.66 1031.56 2569.72 1009.80 C2581.78 988.04 2587.82 923.20 2599.88 923.20 C2611.94 923.20 2617.98 954.20 2630.04 977.60 C2642.10 1001.00 2648.14 1040.20 2660.20 1040.20 C2672.26 1040.20 2678.30 919.30 2690.36 919.30 C2702.42 919.30 2720.52 990.10 2720.52 990.10 M2780.84 1013.90 C2780.84 1013.90 2798.94 1013.00 2811.00 1013.00 C2823.06 1013.00 2841.16 1029.00 2841.16 1029.00" stroke-opacity="0.1" stroke-width="6"/><path d="M1182.36 942.50 C1182.36 942.50 1212.52 989.70 1212.52 989.70 M1272.84 1006.40 C1272.84 1006.40 1303.00 949.20 1303.00 949.20 M1363.32 1045.50 C1363.32 1045.50 1381.42 917.00 1393.48 917.00 C1405.54 917.00 1411.58 986.90 1423.64 1005.80 C1435.70 1024.70 1441.74 1024.70 1453.80 1024.70 C1465.86 1024.70 1471.90 951.80 1483.96 950.80 C1496.02 949.80 1514.12 949.80 1514.12 949.80 M1574.44 1013.00 C1574.44 1013.00 1592.54 950.40 1604.60 950.40 C1616.66 950.40 1622.70 1000.28 1634.76 1020.80 C1646.82 1041.32 1652.86 1053.00 1664.92 1053.00 C1676.98 1053.00 1683.02 938.90 1695.08 928.90 C1707.14 918.90 1713.18 918.90 1725.24 918.90 C1737.30 918.90 1743.34 1036.90 1755.40 1036.90 C1767.46 1036.90 1773.50 990.08 1785.56 967.20 C1797.62 944.32 1815.72 922.50 1815.72 922.50 M1876.04 986.90 C1876.04 986.90 1894.14 945.00 1906.20 945.00 C1918.26 945.00 1924.30 947.18 1936.36 954.70 C1948.42 962.22 1954.46 982.60 1966.52 982.60 C1978.58 982.60 1984.62 948.20 1996.68 948.20 C2008.74 948.20 2014.78 997.54 2026.84 1015.50 C2038.90 1033.46 2044.94 1038.00 2057.00 1038.00 C2069.06 1038.00 2075.10 972.50 2087.16 972.50 C2099.22 972.50 2117.32 985.10 2117.32 985.10 M2177.64 1017.20 C2177.64 1017.20 2195.74 932.50 2207.80 932.50 C2219.86 932.50 2225.90 963.52 2237.96 986.90 C2250.02 1010.28 2256.06 1049.40 2268.12 1049.40 C2280.18 1049.40 2286.22 924.30 2298.28 924.30 C2310.34 924.30 2316.38 987.60 2328.44 1001.20 C2340.50 1014.80 2346.54 1014.80 2358.60 1014.80 C2370.66 1014.80 2376.70 933.20 2388.76 933.20 C2400.82 933.20 2418.92 960.00 2418.92 960.00 M2479.24 1011.60 C2479.24 1011.60 2497.34 924.60 2509.40 924.60 C2521.46 924.60 2527.50 1032.00 2539.56 1032.00 C2551.62 1032.00 2557.66 1031.56 2569.72 1009.80 C2581.78 988.04 2587.82 923.20 2599.88 923.20 C2611.94 923.20 2617.98 954.20 2630.04 977.60 C2642.10 1001.00 2648.14 1040.20 2660.20 1040.20 C2672.26 1040.20 2678.30 919.30 2690.36 919.30 C2702.42 919.30 2720.52 990.10 2720.52 990.10 M2780.84 1013.90 C2780.84 1013.90 2798.94 1013.00 2811.00 1013.00 C2823.06 1013.00 2841.16 1029.00 2841.16 1029.00" stroke-opacity="0.15" stroke-width="2"/></g><path d="M1182.36 942.50 C1182.36 942.50 1212.52 989.70 1212.52 989.70 M1272.84 1006.40 C1272.84 1006.40 1303.00 949.20 1303.00 949.20 M1363.32 1045.50 C1363.32 1045.50 1381.42 917.00 1393.48 917.00 C1405.54 917.00 1411.58 986.90 1423.64 1005.80 C1435.70 1024.70 1441.74 1024.70 1453.80 1024.70 C1465.86 1024.70 1471.90 951.80 1483.96 950.80 C1496.02 949.80 1514.12 949.80 1514.12 949.80 M1574.44 1013.00 C1574.44 1013.00 1592.54 950.40 1604.60 950.40 C1616.66 950.40 1622.70 1000.28 1634.76 1020.80 C1646.82 1041.32 1652.86 1053.00 1664.92 1053.00 C1676.98 1053.00 1683.02 938.90 1695.08 928.90 C1707.14 918.90 1713.18 918.90 1725.24 918.90 C1737.30 918.90 1743.34 1036.90 1755.40 1036.90 C1767.46 1036.90 1773.50 990.08 1785.56 967.20 C1797.62 944.32 1815.72 922.50 1815.72 922.50 M1876.04 986.90 C1876.04 986.90 1894.14 945.00 1906.20 945.00 C1918.26 945.00 1924.30 947.18 1936.36 954.70 C1948.42 962.22 1954.46 982.60 1966.52 982.60 C1978.58 982.60 1984.62 948.20 1996.68 948.20 C2008.74 948.20 2014.78 997.54 2026.84 1015.50 C2038.90 1033.46 2044.94 1038.00 2057.00 1038.00 C2069.06 1038.00 2075.10 972.50 2087.16 972.50 C2099.22 972.50 2117.32 985.10 2117.32 985.10 M2177.64 1017.20 C2177.64 1017.20 2195.74 932.50 2207.80 932.50 C2219.86 932.50 2225.90 963.52 2237.96 986.90 C2250.02 1010.28 2256.06 1049.40 2268.12 1049.40 C2280.18 1049.40 2286.22 924.30 2298.28 924.30 C2310.34 924.30 2316.38 987.60 2328.44 1001.20 C2340.50 1014.80 2346.54 1014.80 2358.60 1014.80 C2370.66 1014.80 2376.70 933.20 2388.76 933.20 C2400.82 933.20 2418.92 960.00 2418.92 960.00 M2479.24 1011.60 C2479.24 1011.60 2497.34 924.60 2509.40 924.60 C2521.46 924.60 2527.50 1032.00 2539.56 1032.00 C2551.62 1032.00 2557.66 1031.56 2569.72 1009.80 C2581.78 988.04 2587.82 923.20 2599.88 923.20 C2611.94 923.20 2617.98 954.20 2630.04 977.60 C2642.10 1001.00 2648.14 1040.20 2660.20 1040.20 C2672.26 1040.20 2678.30 919.30 2690.36 919.30 C2702.42 919.30 2720.52 990.10 2720.52 990.10 M2780.84 1013.90 C2780.84 1013.90 2798.94 1013.00 2811.00 1013.00 C2823.06 1013.00 2841.16 1029.00 2841.16 1029.00" fill="none" stroke="#e040c0" stroke-width="2.2" stroke-linejoin="round" stroke-linecap="round"/><g transform="translate(2,2)" fill="none" stroke="#000" stroke-linejoin="round" stroke-linecap="round"><path d="M1182.36 782.00 C1182.36 782.00 1212.52 722.50 1212.52 722.50 M1272.84 774.90 C1272.84 774.90 1303.00 1007.40 1303.00 1007.40 M1363.32 771.60 C1363.32 771.60 1381.42 760.82 1393.48 750.30 C1405.54 739.78 1411.58 719.00 1423.64 719.00 C1435.70 719.00 1441.74 765.00 1453.80 779.00 C1465.86 793.00 1471.90 779.00 1483.96 793.00 C1496.02 807.00 1514.12 927.00 1514.12 927.00 M1574.44 1001.20 C1574.44 1001.20 1592.54 1001.20 1604.60 996.90 C1616.66 992.60 1622.70 902.50 1634.76 852.70 C1646.82 802.90 1652.86 747.90 1664.92 747.90 C1676.98 747.90 1683.02 858.80 1695.08 858.80 C1707.14 858.80 1713.18 707.20 1725.24 707.20 C1737.30 707.20 1743.34 747.80 1755.40 765.10 C1767.46 782.40 1773.50 765.10 1785.56 793.70 C1797.62 822.30 1815.72 1045.90 1815.72 1045.90 M1876.04 1024.40 C1876.04 1024.40 1894.14 1084.10 1906.20 1084.10 C1918.26 1084.10 1924.30 1027.72 1936.36 972.50 C1948.42 917.28 1954.46 855.42 1966.52 808.00 C1978.58 760.58 1984.62 735.40 1996.68 735.40 C2008.74 735.40 2014.78 735.40 2026.84 735.40 C2038.90 735.40 2044.94 1023.30 2057.00 1023.30 C2069.06 1023.30 2075.10 774.00 2087.16 774.00 C2099.22 774.00 2117.32 931.40 2117.32 931.40 M2177.64 1016.20 C2177.64 1016.20 2195.74 989.86 2207.80 979.70 C2219.86 969.54 2225.90 979.70 2237.96 965.40 C2250.02 951.10 2256.06 806.60 2268.12 776.00 C2280.18 745.40 2286.22 755.80 2298.28 745.40 C2310.34 735.00 2316.38 724.00 2328.44 724.00 C2340.50 724.00 2346.54 815.20 2358.60 815.20 C2370.66 815.20 2376.70 771.50 2388.76 771.50 C2400.82 771.50 2418.92 1013.70 2418.92 1013.70 M2479.24 1015.10 C2479.24 1015.10 2497.34 1015.10 2509.40 1014.10 C2521.46 1013.10 2527.50 1014.10 2539.56 970.40 C2551.62 926.70 2557.66 773.80 2569.72 748.70 C2581.78 723.60 2587.82 723.60 2599.88 723.60 C2611.94 723.60 2617.98 733.10 2630.04 739.70 C2642.10 746.30 2648.14 756.60 2660.20 756.60 C2672.26 756.60 2678.30 756.60 2690.36 746.90 C2702.42 737.20 2720.52 692.20 2720.52 692.20 M2780.84 743.80 C2780.84 743.80 2798.94 890.16 2811.00 946.00 C2823.06 1001.84 2841.16 1023.00 2841.16 1023.00" stroke-opacity="0.05" stroke-width="10"/><path d="M1182.36 782.00 C1182.36 782.00 1212.52 722.50 1212.52 722.50 M1272.84 774.90 C1272.84 774.90 1303.00 1007.40 1303.00 1007.40 M1363.32 771.60 C1363.32 771.60 1381.42 760.82 1393.48 750.30 C1405.54 739.78 1411.58 719.00 1423.64 719.00 C1435.70 719.00 1441.74 765.00 1453.80 779.00 C1465.86 793.00 1471.90 779.00 1483.96 793.00 C1496.02 807.00 1514.12 927.00 1514.12 927.00 M1574.44 1001.20 C1574.44 1001.20 1592.54 1001.20 1604.60 996.90 C1616.66 992.60 1622.70 902.50 1634.76 852.70 C1646.82 802.90 1652.86 747.90 1664.92 747.90 C1676.98 747.90 1683.02 858.80 1695.08 858.80 C1707.14 858.80 1713.18 707.20 1725.24 707.20 C1737.30 707.20 1743.34 747.80 1755.40 765.10 C1767.46 782.40 1773.50 765.10 1785.56 793.70 C1797.62 822.30 1815.72 1045.90 1815.72 1045.90 M1876.04 1024.40 C1876.04 1024.40 1894.14 1084.10 1906.20 1084.10 C1918.26 1084.10 1924.30 1027.72 1936.36 972.50 C1948.42 917.28 1954.46 855.42 1966.52 808.00 C1978.58 760.58 1984.62 735.40 1996.68 735.40 C2008.74 735.40 2014.78 735.40 2026.84 735.40 C2038.90 735.40 2044.94 1023.30 2057.00 1023.30 C2069.06 1023.30 2075.10 774.00 2087.16 774.00 C2099.22 774.00 2117.32 931.40 2117.32 931.40 M2177.64 1016.20 C2177.64 1016.20 2195.74 989.86 2207.80 979.70 C2219.86 969.54 2225.90 979.70 2237.96 965.40 C2250.02 951.10 2256.06 806.60 2268.12 776.00 C2280.18 745.40 2286.22 755.80 2298.28 745.40 C2310.34 735.00 2316.38 724.00 2328.44 724.00 C2340.50 724.00 2346.54 815.20 2358.60 815.20 C2370.66 815.20 2376.70 771.50 2388.76 771.50 C2400.82 771.50 2418.92 1013.70 2418.92 1013.70 M2479.24 1015.10 C2479.24 1015.10 2497.34 1015.10 2509.40 1014.10 C2521.46 1013.10 2527.50 1014.10 2539.56 970.40 C2551.62 926.70 2557.66 773.80 2569.72 748.70 C2581.78 723.60 2587.82 723.60 2599.88 723.60 C2611.94 723.60 2617.98 733.10 2630.04 739.70 C2642.10 746.30 2648.14 756.60 2660.20 756.60 C2672.26 756.60 2678.30 756.60 2690.36 746.90 C2702.42 737.20 2720.52 692.20 2720.52 692.20 M2780.84 743.80 C2780.84 743.80 2798.94 890.16 2811.00 946.00 C2823.06 1001.84 2841.16 1023.00 2841.16 1023.00" stroke-opacity="0.1" stroke-width="6"/><path d="M1182.36 782.00 C1182.36 782.00 1212.52 722.50 1212.52 722.50 M1272.84 774.90 C1272.84 774.90 1303.00 1007.40 1303.00 1007.40 M1363.32 771.60 C1363.32 771.60 1381.42 760.82 1393.48 750.30 C1405.54 739.78 1411.58 719.00 1423.64 719.00 C1435.70 719.00 1441.74 765.00 1453.80 779.00 C1465.86 793.00 1471.90 779.00 1483.96 793.00 C1496.02 807.00 1514.12 927.00 1514.12 927.00 M1574.44 1001.20 C1574.44 1001.20 1592.54 1001.20 1604.60 996.90 C1616.66 992.60 1622.70 902.50 1634.76 852.70 C1646.82 802.90 1652.86 747.90 1664.92 747.90 C1676.98 747.90 1683.02 858.80 1695.08 858.80 C1707.14 858.80 1713.18 707.20 1725.24 707.20 C1737.30 707.20 1743.34 747.80 1755.40 765.10 C1767.46 782.40 1773.50 765.10 1785.56 793.70 C1797.62 822.30 1815.72 1045.90 1815.72 1045.90 M1876.04 1024.40 C1876.04 1024.40 1894.14 1084.10 1906.20 1084.10 C1918.26 1084.10 1924.30 1027.72 1936.36 972.50 C1948.42 917.28 1954.46 855.42 1966.52 808.00 C1978.58 760.58 1984.62 735.40 1996.68 735.40 C2008.74 735.40 2014.78 735.40 2026.84 735.40 C2038.90 735.40 2044.94 1023.30 2057.00 1023.30 C2069.06 1023.30 2075.10 774.00 2087.16 774.00 C2099.22 774.00 2117.32 931.40 2117.32 931.40 M2177.64 1016.20 C2177.64 1016.20 2195.74 989.86 2207.80 979.70 C2219.86 969.54 2225.90 979.70 2237.96 965.40 C2250.02 951.10 2256.06 806.60 2268.12 776.00 C2280.18 745.40 2286.22 755.80 2298.28 745.40 C2310.34 735.00 2316.38 724.00 2328.44 724.00 C2340.50 724.00 2346.54 815.20 2358.60 815.20 C2370.66 815.20 2376.70 771.50 2388.76 771.50 C2400.82 771.50 2418.92 1013.70 2418.92 1013.70 M2479.24 1015.10 C2479.24 1015.10 2497.34 1015.10 2509.40 1014.10 C2521.46 1013.10 2527.50 1014.10 2539.56 970.40 C2551.62 926.70 2557.66 773.80 2569.72 748.70 C2581.78 723.60 2587.82 723.60 2599.88 723.60 C2611.94 723.60 2617.98 733.10 2630.04 739.70 C2642.10 746.30 2648.14 756.60 2660.20 756.60 C2672.26 756.60 2678.30 756.60 2690.36 746.90 C2702.42 737.20 2720.52 692.20 2720.52 692.20 M2780.84 743.80 C2780.84 743.80 2798.94 890.16 2811.00 946.00 C2823.06 1001.84 2841.16 1023.00 2841.16 1023.00" stroke-opacity="0.15" stroke-width="2"/></g><path d="M1182.36 782.00 C1182.36 782.00 1212.52 722.50 1212.52 722.50 M1272.84 774.90 C1272.84 774.90 1303.00 1007.40 1303.00 1007.40 M1363.32 771.60 C1363.32 771.60 1381.42 760.82 1393.48 750.30 C1405.54 739.78 1411.58 719.00 1423.64 719.00 C1435.70 719.00 1441.74 765.00 1453.80 779.00 C1465.86 793.00 1471.90 779.00 1483.96 793.00 C1496.02 807.00 1514.12 927.00 1514.12 927.00 M1574.44 1001.20 C1574.44 1001.20 1592.54 1001.20 1604.60 996.90 C1616.66 992.60 1622.70 902.50 1634.76 852.70 C1646.82 802.90 1652.86 747.90 1664.92 747.90 C1676.98 747.90 1683.02 858.80 1695.08 858.80 C1707.14 858.80 1713.18 707.20 1725.24 707.20 C1737.30 707.20 1743.34 747.80 1755.40 765.10 C1767.46 782.40 1773.50 765.10 1785.56 793.70 C1797.62 822.30 1815.72 1045.90 1815.72 1045.90 M1876.04 1024.40 C1876.04 1024.40 1894.14 1084.10 1906.20 1084.10 C1918.26 1084.10 1924.30 1027.72 1936.36 972.50 C1948.42 917.28 1954.46 855.42 1966.52 808.00 C1978.58 760.58 1984.62 735.40 1996.68 735.40 C2008.74 735.40 2014.78 735.40 2026.84 735.40 C2038.90 735.40 2044.94 1023.30 2057.00 1023.30 C2069.06 1023.30 2075.10 774.00 2087.16 774.00 C2099.22 774.00 2117.32 931.40 2117.32 931.40 M2177.64 1016.20 C2177.64 1016.20 2195.74 989.86 2207.80 979.70 C2219.86 969.54 2225.90 979.70 2237.96 965.40 C2250.02 951.10 2256.06 806.60 2268.12 776.00 C2280.18 745.40 2286.22 755.80 2298.28 745.40 C2310.34 735.00 2316.38 724.00 2328.44 724.00 C2340.50 724.00 2346.54 815.20 2358.60 815.20 C2370.66 815.20 2376.70 771.50 2388.76 771.50 C2400.82 771.50 2418.92 1013.70 2418.92 1013.70 M2479.24 1015.10 C2479.24 1015.10 2497.34 1015.10 2509.40 1014.10 C2521.46 1013.10 2527.50 1014.10 2539.56 970.40 C2551.62 926.70 2557.66 773.80 2569.72 748.70 C2581.78 723.60 2587.82 723.60 2599.88 723.60 C2611.94 723.60 2617.98 733.10 2630.04 739.70 C2642.10 746.30 2648.14 756.60 2660.20 756.60 C2672.26 756.60 2678.30 756.60 2690.36 746.90 C2702.42 737.20 2720.52 692.20 2720.52 692.20 M2780.84 743.80 C2780.84 743.80 2798.94 890.16 2811.00 946.00 C2823.06 1001.84 2841.16 1023.00 2841.16 1023.00" fill="none" stroke="#3a4ad8" stroke-width="2.2" stroke-linejoin="round" stroke-linecap="round"/></svg>
<div class="t" style="left:1017.25px;top:556.10px;font-size:24px;color:#2a3137;transform:scaleX(0.9515);transform-origin:1.75px 0;">1.00 Gbps</div>
<div class="t" style="left:985.15px;top:696.00px;font-size:24px;color:#2a3137;transform:scaleX(0.9916);transform-origin:1.75px 0;">100.00 Mbps</div>
<div class="t" style="left:998.85px;top:838.50px;font-size:24px;color:#2a3137;transform:scaleX(0.9870);transform-origin:1.75px 0;">10.00 Mbps</div>
<div class="t" style="left:1012.45px;top:980.00px;font-size:24px;color:#2a3137;transform:scaleX(0.9845);transform-origin:1.75px 0;">1.00 Mbps</div>
<div class="t" style="left:990.75px;top:1120.20px;font-size:24px;color:#2a3137;transform:scaleX(0.9792);transform-origin:1.75px 0;">100.00 Kbps</div>
<div class="t" style="left:1004.95px;top:1262.00px;font-size:24px;color:#2a3137;transform:scaleX(0.9689);transform-origin:1.75px 0;">10.00 Kbps</div>
<div class="t" style="left:1136.95px;top:1292.40px;font-size:24px;color:#2a3137;transform:scaleX(0.9933);transform-origin:1.75px 0;">10:15 pm</div>
<div class="t" style="left:1287.45px;top:1292.40px;font-size:24px;color:#2a3137;">10:30 pm</div>
<div class="t" style="left:1438.45px;top:1292.40px;font-size:24px;color:#2a3137;transform:scaleX(0.9964);transform-origin:1.75px 0;">10:45 pm</div>
<div class="t" style="left:1589.55px;top:1292.40px;font-size:24px;color:#2a3137;transform:scaleX(1.0105);transform-origin:1.75px 0;">11:00 pm</div>
<div class="t" style="left:1740.35px;top:1292.40px;font-size:24px;color:#2a3137;transform:scaleX(1.0116);transform-origin:1.75px 0;">11:15 pm</div>
<div class="t" style="left:1891.15px;top:1292.40px;font-size:24px;color:#2a3137;transform:scaleX(1.0116);transform-origin:1.75px 0;">11:30 pm</div>
<div class="t" style="left:2041.45px;top:1292.40px;font-size:24px;color:#2a3137;transform:scaleX(1.0211);transform-origin:1.75px 0;">11:45 pm</div>
<div class="t" style="left:2200.80px;top:1292.40px;font-size:24px;color:#2a3137;transform:scaleX(0.9674);transform-origin:1.00px 0;">31. May</div>
<div class="t" style="left:2343.65px;top:1292.40px;font-size:24px;color:#2a3137;transform:scaleX(0.9891);transform-origin:1.75px 0;">12:15 am</div>
<div class="t" style="left:2495.75px;top:1292.40px;font-size:24px;color:#2a3137;transform:scaleX(0.9788);transform-origin:1.75px 0;">12:30 am</div>
<div class="t" style="left:2645.55px;top:1292.40px;font-size:24px;color:#2a3137;transform:scaleX(0.9829);transform-origin:1.75px 0;">12:45 am</div>
<div class="t" style="left:2803.35px;top:1292.40px;font-size:24px;color:#2a3137;transform:scaleX(0.9760);transform-origin:1.75px 0;">1:00 am</div>
</body></html>
